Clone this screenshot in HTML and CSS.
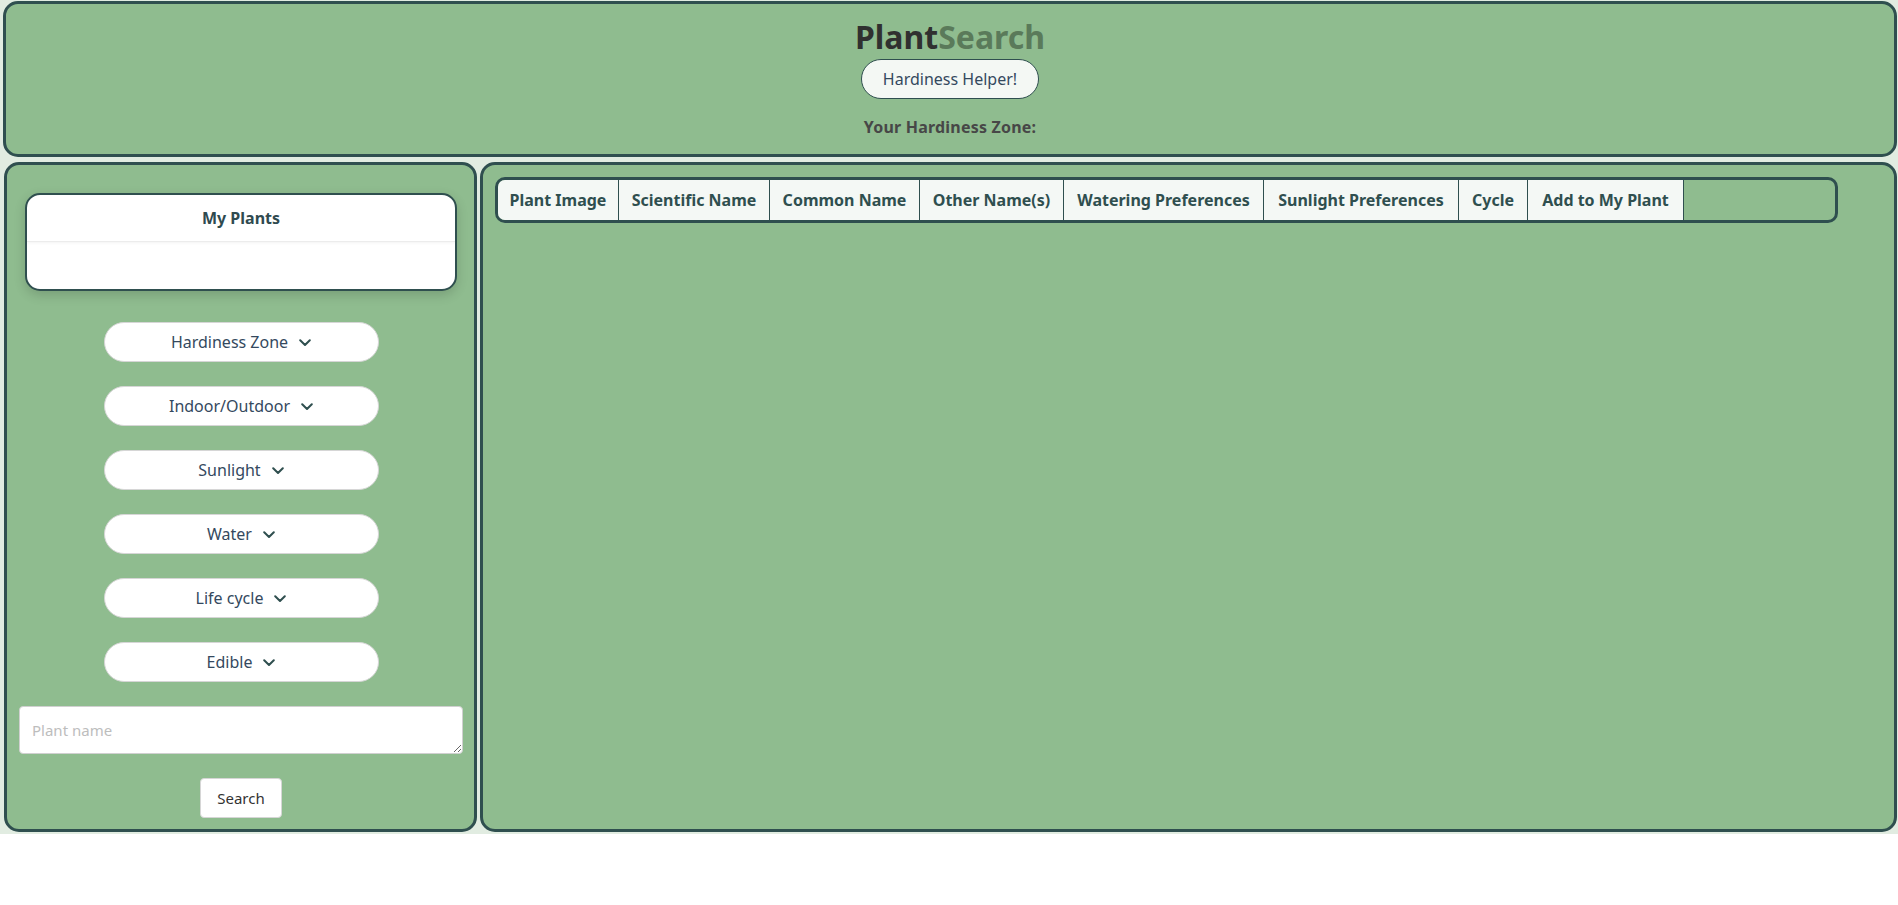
FILE: index.html
```html
<!DOCTYPE html>
<html lang="en">
<head>
<meta charset="utf-8">
<title>PlantSearch</title>
<link rel="stylesheet" href="styles.css">
</head>
<body>
<div class="page">
  <header class="header">
    <h1 class="title"><span class="title-a">Plant</span><span class="title-b">Search</span></h1>
    <button class="helper-btn" type="button">Hardiness Helper!</button>
    <p class="zone">Your Hardiness Zone:</p>
  </header>
  <div class="row">
    <aside class="sidebar">
      <div class="card">
        <div class="card-head">My Plants</div>
        <div class="card-body"></div>
      </div>
      <div class="filters">
        <button class="dropdown" type="button"><span>Hardiness Zone</span><svg class="chev" viewBox="0 0 12 8" width="12" height="8"><polyline points="1.2,1.2 6,6 10.8,1.2"/></svg></button>
        <button class="dropdown" type="button"><span>Indoor/Outdoor</span><svg class="chev" viewBox="0 0 12 8" width="12" height="8"><polyline points="1.2,1.2 6,6 10.8,1.2"/></svg></button>
        <button class="dropdown" type="button"><span>Sunlight</span><svg class="chev" viewBox="0 0 12 8" width="12" height="8"><polyline points="1.2,1.2 6,6 10.8,1.2"/></svg></button>
        <button class="dropdown" type="button"><span>Water</span><svg class="chev" viewBox="0 0 12 8" width="12" height="8"><polyline points="1.2,1.2 6,6 10.8,1.2"/></svg></button>
        <button class="dropdown" type="button"><span>Life cycle</span><svg class="chev" viewBox="0 0 12 8" width="12" height="8"><polyline points="1.2,1.2 6,6 10.8,1.2"/></svg></button>
        <button class="dropdown" type="button"><span>Edible</span><svg class="chev" viewBox="0 0 12 8" width="12" height="8"><polyline points="1.2,1.2 6,6 10.8,1.2"/></svg></button>
      </div>
      <textarea class="name-input" rows="1" placeholder="Plant name"></textarea>
      <div class="search-wrap"><button class="search-btn" type="button">Search</button></div>
    </aside>
    <main class="main">
      <div class="table">
        <div class="th th-image">Plant Image</div>
        <div class="th th-sci">Scientific Name</div>
        <div class="th th-common">Common Name</div>
        <div class="th th-other">Other Name(s)</div>
        <div class="th th-water">Watering Preferences</div>
        <div class="th th-sun">Sunlight Preferences</div>
        <div class="th th-cycle">Cycle</div>
        <div class="th th-add">Add to My Plant</div>
      </div>
    </main>
  </div>
</div>
</body>
</html>
```
FILE: styles.css
```css
* { box-sizing: border-box; }

html, body {
  margin: 0;
  padding: 0;
  background: #ffffff;
  font-family: "Noto Sans", "Open Sans", sans-serif;
}

.page {
  background: #e1ece1;
  padding: 1px 1px 2px 3px;
}

.header {
  background: #8fbc8f;
  border: 3px solid #2f4f4f;
  border-radius: 15px;
  padding: 11px 0 16px;
  display: flex;
  flex-direction: column;
  align-items: center;
}

.title {
  margin: 0;
  font-size: 32px;
  line-height: 44px;
  font-weight: 700;
}

.title-a { color: #303030; }
.title-b { color: #5a7a5a; }

.helper-btn {
  height: 40px;
  padding: 0 21px;
  border: 1px solid #2f4f4f;
  border-radius: 20px;
  background: #f4f8f4;
  color: #34495e;
  font-family: inherit;
  font-size: 16px;
  line-height: 38px;
}

.zone {
  margin: 17px 0 0;
  font-size: 16px;
  line-height: 22px;
  font-weight: 700;
  letter-spacing: 0.2px;
  color: #474747;
}

.row {
  display: flex;
  gap: 3px;
  margin-top: 5px;
}

.sidebar {
  width: 473px;
  flex: 0 0 473px;
  margin-left: 1px;
  background: #8fbc8f;
  border: 3px solid #2f4f4f;
  border-radius: 15px;
  padding: 28px 11px 11px 12px;
  display: flex;
  flex-direction: column;
}

.card {
  margin: 0 6px;
  height: 98px;
  background: #ffffff;
  border: 2px solid #2f4f4f;
  border-radius: 15px;
  box-shadow: 0 4px 12px rgba(0, 0, 0, 0.16);
  overflow: hidden;
}

.card-head {
  height: 47px;
  line-height: 46px;
  text-align: center;
  font-size: 16px;
  font-weight: 700;
  color: #2f4a4f;
  border-bottom: 1px solid #ececec;
  box-shadow: 0 1px 3px rgba(0, 0, 0, 0.05);
}

.filters {
  margin-top: 31px;
  display: flex;
  flex-direction: column;
  align-items: center;
  gap: 24px;
}

.dropdown {
  width: 275px;
  height: 40px;
  border: 1px solid #d6d6d6;
  border-radius: 20px;
  background: #ffffff;
  color: #34495e;
  font-family: inherit;
  font-size: 16px;
  display: flex;
  align-items: center;
  justify-content: center;
  gap: 11px;
  padding: 0;
}

.chev {
  fill: none;
  stroke: #2f4f4f;
  stroke-width: 2;
  stroke-linecap: round;
  stroke-linejoin: round;
  margin-top: 2px;
}

.name-input {
  margin-top: 24px;
  width: 100%;
  height: 48px;
  padding: 13px 12px;
  border: 1px solid #d0d0d0;
  border-radius: 4px;
  font-family: inherit;
  font-size: 15px;
  color: #333;
  background: #ffffff;
}

.name-input::placeholder { color: #bdbdbd; }

.search-wrap {
  margin-top: 24px;
  display: flex;
  justify-content: center;
}

.search-btn {
  height: 40px;
  padding: 0 16px;
  border: 1px solid #d6d6d6;
  border-radius: 4px;
  background: #ffffff;
  color: #333333;
  font-family: inherit;
  font-size: 15px;
}

.main {
  flex: 1;
  background: #8fbc8f;
  border: 3px solid #2f4f4f;
  border-radius: 15px;
  padding: 12px;
}

.table {
  width: 1343px;
  display: flex;
  border: 3px solid #2f4f4f;
  border-radius: 10px;
  overflow: hidden;
}

.th {
  flex: 0 0 auto;
  background: #f4f8f5;
  color: #2f4f4f;
  font-size: 16px;
  font-weight: 700;
  line-height: 40px;
  text-align: center;
  border-right: 1px solid #2f4f4f;
  white-space: nowrap;
}

.th-image { width: 121px; }
.th-sci { width: 151px; }
.th-common { width: 150px; }
.th-other { width: 144px; }
.th-water { width: 200px; }
.th-sun { width: 195px; }
.th-cycle { width: 69px; }
.th-add { width: 156px; }
```
